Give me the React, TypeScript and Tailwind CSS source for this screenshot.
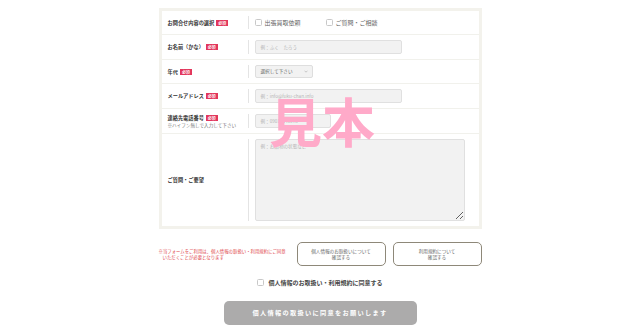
import React from "react";

const F = { fontFamily: '"Noto Sans CJK JP", "Noto Sans", sans-serif' };

function Badge() {
  return (
    <span className="ml-[2px] inline-flex h-[6px] items-center bg-[#e2365c] px-[2px] text-[4px] leading-none font-bold text-white">
      必須
    </span>
  );
}

function Row({
  label,
  sub,
  badge = true,
  h,
  children,
  last,
  center = true,
}: {
  label: string;
  sub?: string;
  badge?: boolean;
  h: string;
  children: React.ReactNode;
  last?: boolean;
  center?: boolean;
}) {
  return (
    <div className={`flex ${h} ${last ? "" : "border-b border-[#f1f1ec]"}`}>
      <div className="flex w-[86px] shrink-0 flex-col justify-center pl-[6px]">
        <div className="flex items-center text-[5.2px] leading-none font-bold text-[#333]">
          <span>{label}</span>
          {badge && <Badge />}
        </div>
        {sub && <div className="mt-[2px] text-[4.6px] leading-none text-[#777]">{sub}</div>}
      </div>
      <div className={`flex flex-1 ${center ? "items-center" : ""} py-[5px]`}>
        <div className="h-full w-px bg-[#e4e4e4]" />
        <div className={`flex flex-1 ${center ? "items-center" : ""} pl-[6px] pr-[14px]`}>{children}</div>
      </div>
    </div>
  );
}

function Input({ w, ph }: { w: string; ph: string }) {
  return (
    <div
      className={`${w} flex h-[14px] items-center rounded-[2px] border border-[#e0e0e0] bg-[#f2f2f2] pl-[5px] text-[4.6px] text-[#b5b5b5]`}
    >
      {ph}
    </div>
  );
}

function Check() {
  return <span className="inline-block h-[7px] w-[7px] rounded-[1.5px] border border-[#c8c8c8] bg-white" />;
}

export default function App() {
  return (
    <div className="relative h-[333px] w-[640px] overflow-hidden bg-white" style={F}>
      <div className="mx-auto w-[323px] pt-[8px]">
        <div className="border-[3px] border-[#f3f2ec] bg-white">
          <Row label="お問合せ内容の選択" h="h-[24px]">
            <div className="flex items-center text-[6px] text-[#666]">
              <Check />
              <span className="ml-[3px]">出張買取依頼</span>
              <span className="ml-[25px] flex">
                <Check />
              </span>
              <span className="ml-[3px]">ご質問・ご相談</span>
            </div>
          </Row>
          <Row label="お名前（かな）" h="h-[25px]">
            <Input w="w-[147px]" ph="例：ふく　たろう" />
          </Row>
          <Row label="年代" h="h-[24px]">
            <div className="flex h-[13px] w-[58px] items-center justify-between rounded-[2px] border border-[#dedede] bg-[#f2f2f2] pl-[5px] pr-[4px] text-[4.6px] text-[#666]">
              <span>選択して下さい</span>
              <svg width="4" height="3" viewBox="0 0 4 3">
                <path d="M0.5 0.7 L2 2.2 L3.5 0.7" stroke="#aaa" strokeWidth="0.6" fill="none" />
              </svg>
            </div>
          </Row>
          <Row label="メールアドレス" h="h-[25px]">
            <Input w="w-[147px]" ph="例：info@fuku-chan.info" />
          </Row>
          <Row label="連絡先電話番号" sub="※ハイフン無しで入力して下さい" h="h-[25px]">
            <Input w="w-[76px]" ph="例：09012345678" />
          </Row>
          <Row label="ご質問・ご要望" badge={false} h="h-[92px]" last center={false}>
            <textarea
              className="h-full w-full rounded-[2px] border border-[#e0e0e0] bg-[#f2f2f2] px-[5px] py-[3px] text-[4.6px] text-[#666] placeholder:text-[#b5b5b5] outline-none"
              placeholder="例：お品物の状態など"
            />
          </Row>
        </div>

        <div className="mt-[13px] flex items-center">
          <div className="flex-1 text-[4.4px] leading-[6px] text-[#e0474c]">
            <div>※当フォームをご利用は、個人情報の取扱い・利用規約にご同意</div>
            <div className="pl-[4px]">いただくことが必要となります</div>
          </div>
          <div className="flex gap-[7px]">
            <div className="flex h-[24px] w-[89px] flex-col items-center justify-center rounded-[5px] border border-[#8e8879] text-[4.6px] leading-[6px] text-[#666]">
              <span>個人情報のお取扱いについて</span>
              <span>確認する</span>
            </div>
            <div className="flex h-[24px] w-[89px] flex-col items-center justify-center rounded-[5px] border border-[#8e8879] text-[4.6px] leading-[6px] text-[#666]">
              <span>利用規約について</span>
              <span>確認する</span>
            </div>
          </div>
        </div>

        <div className="mt-[12px] flex items-center justify-center">
          <Check />
          <span className="ml-[4px] text-[6px] font-bold text-[#444]">個人情報のお取扱い・利用規約に同意する</span>
        </div>

        <div className="mt-[14px] flex justify-center">
          <div className="flex h-[24px] w-[193px] items-center justify-center rounded-[5px] bg-[#acabab] text-[6.2px] font-bold tracking-[1.3px] text-white">
            個人情報の取扱いに同意をお願いします
          </div>
        </div>
      </div>

      <div
        className="pointer-events-none absolute left-[269px] top-[94px] text-[53px] leading-none font-bold text-[#ffaac9]"
        style={F}
      >
        見本
      </div>
    </div>
  );
}
